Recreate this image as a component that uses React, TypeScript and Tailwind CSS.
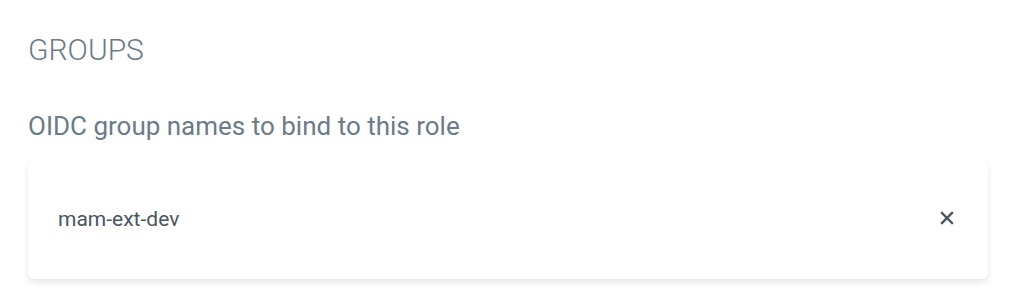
export default function App() {
  return (
    <div className="min-h-[296px] w-[1032px] bg-white px-7 pt-[30px] font-['Roboto',sans-serif]">
      <h2 className="text-[30px] font-light leading-[40px] text-[#6b7b88]">GROUPS</h2>
      <p className="mt-[39px] text-[26px] leading-[34px] text-[#6b7b88]">OIDC group names to bind to this role</p>

      {/* Group list */}
      <div className="mt-[18px] w-[960px] rounded-md bg-white shadow-[0_3px_6px_rgba(0,0,0,0.11)]">
        <div className="flex h-[118px] items-center justify-between pl-[30px] pr-[34px]">
          <span className="text-[21px] text-[#4a5560]">mam-ext-dev</span>
          <button className="mb-1 text-[#4a5560]" aria-label="Remove">
            <svg width="14" height="14" viewBox="0 0 14 14" fill="none" stroke="currentColor" strokeWidth="2.4" strokeLinecap="square">
              <path d="M2 2L12 12M12 2L2 12" />
            </svg>
          </button>
        </div>
      </div>
    </div>
  )
}
